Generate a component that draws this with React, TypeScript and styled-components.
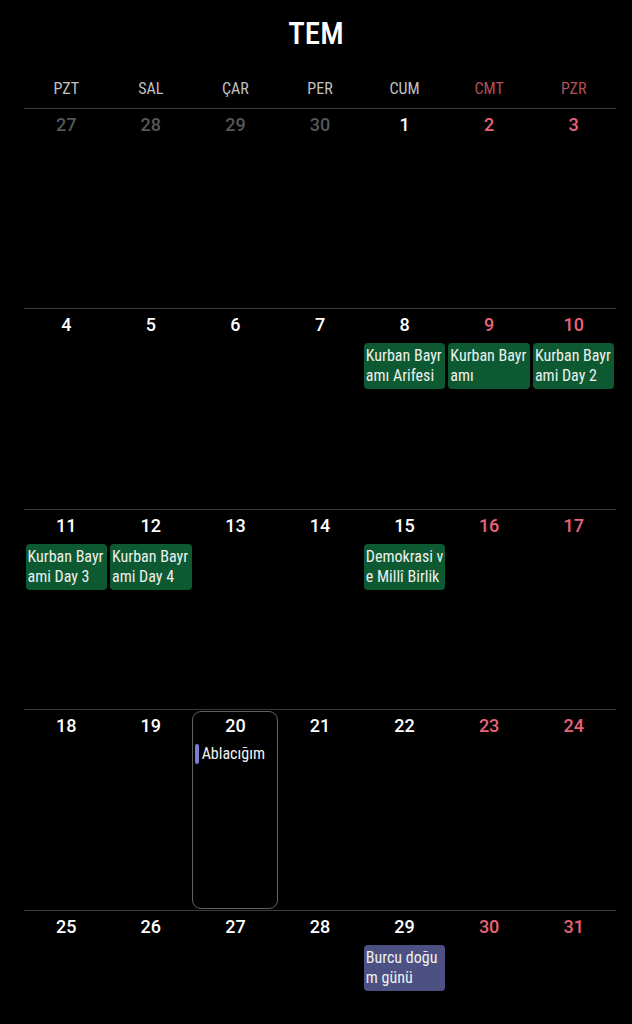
import React from "react";
import styled, { createGlobalStyle } from "styled-components";

const Global = createGlobalStyle`
  html, body { margin: 0; padding: 0; background: #000; }
  body { overflow: hidden; font-family: "Roboto Condensed", Roboto, "Noto Sans", sans-serif; }
  * { box-sizing: border-box; }
`;

const Page = styled.div`
  width: 632px;
  height: 1024px;
  background: #000;
  color: #fff;
  display: flex;
  flex-direction: column;
  overflow: hidden;
`;

const Title = styled.div`
  flex: none;
  height: 66px;
  display: flex;
  align-items: center;
  justify-content: center;
  font-size: 31px;
  font-weight: 500;
  color: #fff;
`;

const Grid = styled.div`
  flex: none;
  margin: 0 16px 0 24px;
  display: flex;
  flex-direction: column;
`;

const WeekHeader = styled.div`
  flex: none;
  display: grid;
  grid-template-columns: repeat(7, 1fr);
  height: 41.5px;
  align-items: center;
  padding-top: 4px;
`;

const DayName = styled.div<{ $weekend?: boolean }>`
  text-align: center;
  font-size: 16px;
  font-weight: 400;
  color: ${(p) => (p.$weekend ? "#b54e5d" : "#c2c2c2")};
`;

const Week = styled.div`
  flex: none;
  display: grid;
  grid-template-columns: repeat(7, 1fr);
  height: 200.5px;
  border-top: 1px solid #3a3a3a;
`;

const Cell = styled.div<{ $selected?: boolean }>`
  position: relative;
  display: flex;
  flex-direction: column;
  min-width: 0;
  padding: 4px 1.5px 0 1.5px;
  &::before {
    content: "";
    display: ${(p) => (p.$selected ? "block" : "none")};
    position: absolute;
    top: 1px;
    bottom: 1px;
    left: -1px;
    right: 0px;
    border: 1.5px solid #626262;
    border-radius: 9px;
    pointer-events: none;
  }
`;

const DayNum = styled.div<{ $tone: "normal" | "weekend" | "muted" }>`
  text-align: center;
  font-family: Roboto, "Noto Sans", sans-serif;
  font-size: 18px;
  font-weight: 500;
  line-height: 24px;
  height: 24px;
  color: ${(p) =>
    p.$tone === "weekend" ? "#e8637a" : p.$tone === "muted" ? "#575757" : "#ffffff"};
`;

const Chip = styled.div<{ $bg: string }>`
  margin: 6px 0 0 0;
  background: ${(p) => p.$bg};
  border-radius: 4px;
  height: 46px;
  padding: 3px 0 3px 2px;
`;

const ChipText = styled.div`
  height: 40px;
  overflow: hidden;
  font-size: 16px;
  line-height: 20px;
  color: #eef0ee;
  word-break: break-all;
`;

const Dot = styled.div`
  margin-top: 6px;
  display: flex;
  align-items: center;
  gap: 3px;
  font-size: 16px;
  line-height: 20px;
  color: #f2f2f2;
  white-space: nowrap;
  overflow: hidden;
`;

const Bar = styled.span`
  width: 4px;
  height: 20px;
  border-radius: 2px;
  background: #7b7fd4;
  flex: none;
`;

type Ev = { title: string; kind: "chip" | "dot"; color?: string };
type Day = { n: number; tone: "normal" | "weekend" | "muted"; selected?: boolean; events?: Ev[] };

const green = "#0d5a32";
const purple = "#4d5083";

const names = ["PZT", "SAL", "ÇAR", "PER", "CUM", "CMT", "PZR"];

const weeks: Day[][] = [];
const ev: Record<number, Ev[]> = {
  8: [{ title: "Kurban Bayramı Arifesi", kind: "chip", color: green }],
  9: [{ title: "Kurban Bayramı", kind: "chip", color: green }],
  10: [{ title: "Kurban Bayrami Day 2", kind: "chip", color: green }],
  11: [{ title: "Kurban Bayrami Day 3", kind: "chip", color: green }],
  12: [{ title: "Kurban Bayrami Day 4", kind: "chip", color: green }],
  15: [{ title: "Demokrasi ve Millî Birlik Günü", kind: "chip", color: green }],
  20: [{ title: "Ablacığım", kind: "dot" }],
  29: [{ title: "Burcu doğum günü", kind: "chip", color: purple }],
};
{
  const first: Day[] = [27, 28, 29, 30].map((n) => ({ n, tone: "muted" as const }));
  let d = 1;
  while (first.length < 7) {
    first.push({ n: d, tone: first.length >= 5 ? "weekend" : "normal", events: ev[d] });
    d++;
  }
  weeks.push(first);
  while (d <= 31) {
    const w: Day[] = [];
    for (let i = 0; i < 7 && d <= 31; i++, d++) {
      w.push({ n: d, tone: i >= 5 ? "weekend" : "normal", events: ev[d], selected: d === 20 });
    }
    weeks.push(w);
  }
}

export default function App() {
  return (
    <Page>
      <Global />
      <Title>TEM</Title>
      <Grid>
        <WeekHeader>
          {names.map((n, i) => (
            <DayName key={n} $weekend={i >= 5}>
              {n}
            </DayName>
          ))}
        </WeekHeader>
        {weeks.map((w, wi) => (
          <Week key={wi}>
            {w.map((day) => (
              <Cell key={day.n + "-" + wi} $selected={day.selected}>
                <DayNum $tone={day.tone}>{day.n}</DayNum>
                {day.events?.map((e) =>
                  e.kind === "chip" ? (
                    <Chip key={e.title} $bg={e.color || green}>
                      <ChipText>{e.title}</ChipText>
                    </Chip>
                  ) : (
                    <Dot key={e.title}>
                      <Bar />
                      {e.title}
                    </Dot>
                  )
                )}
              </Cell>
            ))}
          </Week>
        ))}
      </Grid>
    </Page>
  );
}
